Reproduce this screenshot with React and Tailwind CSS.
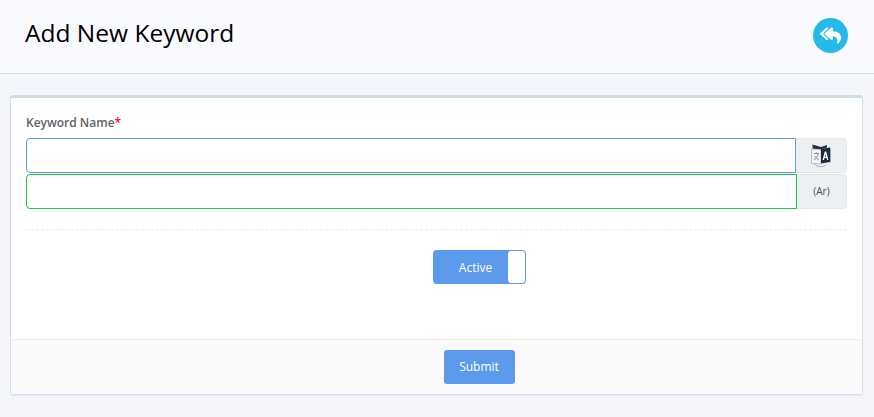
import React from 'react';
import { FaReplyAll } from 'react-icons/fa';

const TranslateIcon = () => (
    <svg width="24" height="24" viewBox="0 0 24 24" fill="none">
        <path d="M2.5 5.5 L12 4.5 V20 L2.5 19.5 Z" fill="#f7f5ee" stroke="#a9bccb" strokeWidth="0.9" />
        <path d="M3.5 0.5 L12 3 L18 1 V3.5 L12 5.5 L3.5 4.5 Z" fill="#27303f" />
        <path d="M12 5 L21 3.5 V18 L12 19.5 Z" fill="#1f2a3d" />
        <path d="M21.5 4 V18.5" stroke="#6f9ad0" strokeWidth="0.8" />
        <path d="M5 9.5 H10 M7.5 8.5 V10 M9 10 C8.5 12.5 7.5 14.5 5 16 M6 12 C6.8 13.8 8 15 10 16" stroke="#7a838e" strokeWidth="0.9" />
        <path d="M13.5 16 L15.8 7.5 H17.2 L19.5 16 H18 L17.5 14 H15.5 L15 16 Z M15.9 12.7 H17.1 L16.5 10 Z" fill="#fff" fillRule="evenodd" />
        <path d="M5.5 20 C8 23.2 13 23.6 17 21" stroke="#9aa7b2" strokeWidth="0.9" />
    </svg>
);

export default function App() {
    return (
        <div className="min-h-[417px] bg-[#f4f6fb] font-['Open_Sans',sans-serif] overflow-hidden">
            <header className="h-[74px] bg-[#f9fafd] border-b border-[#d5dde2] flex items-center justify-between pl-[25px] pr-[26px]">
                <h1 className="text-[24.5px] leading-[32px] text-black -mt-[8px]">Add New Keyword</h1>
                <button className="w-[35px] h-[35px] rounded-full bg-[#23b9e8] flex items-center justify-center -mt-[3px]">
                    <FaReplyAll size={21} color="#fff" />
                </button>
            </header>

            <main className="pt-[21px] pl-[10px] pr-[11px]">
                <div className="h-[300px] bg-white border border-[#d3dee6] border-t-[3px] border-t-[#d0dfe6] rounded-[3px] flex flex-col shadow-[0_1px_1px_rgba(0,0,0,0.05)]">
                    <div className="flex-1 px-[15px] pt-[16px]">
                        <label className="block text-[12px] leading-[17px] font-semibold text-[#5f6368]">
                            Keyword Name<span className="text-[#ff0022]">*</span>
                        </label>
                        <div className="flex mt-[7px] h-[35px]">
                            <input className="flex-1 min-w-0 border border-[#5b9bec] rounded-l-[4px] outline-none" />
                            <div className="w-[51px] bg-[#edf0f2] border border-[#e4e8eb] border-l-0 rounded-r-[4px] flex items-center justify-center">
                                <TranslateIcon />
                            </div>
                        </div>
                        <div className="flex mt-px h-[35px]">
                            <input className="flex-1 min-w-0 border border-[#22c443] rounded-l-[4px] outline-none" />
                            <div className="w-[50px] bg-[#edf0f2] border border-[#e4e8eb] border-l-0 rounded-r-[4px] flex items-center justify-center text-[10px] text-[#454b56]">
                                (Ar)
                            </div>
                        </div>
                        <div className="mt-[20px] border-t border-dashed border-[#e8ebee]" />
                        <div className="flex justify-center mt-[20px] pl-[85px]">
                            <div className="w-[93px] h-[34px] bg-[#5c9bec] rounded-[4px] flex items-center p-px">
                                <span className="flex-1 text-center text-[12px] font-medium text-white pl-[10px] pt-[2px]">Active</span>
                                <span className="w-[17px] h-full bg-white rounded-[3px]" />
                            </div>
                        </div>
                    </div>
                    <div className="h-[55px] bg-[#fafafa] border-t border-[#eceef0] flex justify-center items-center pl-[85px]">
                        <button className="w-[71px] h-[34px] bg-[#5c9bec] rounded-[3px] text-[12px] font-medium text-white">Submit</button>
                    </div>
                </div>
            </main>
        </div>
    );
}
